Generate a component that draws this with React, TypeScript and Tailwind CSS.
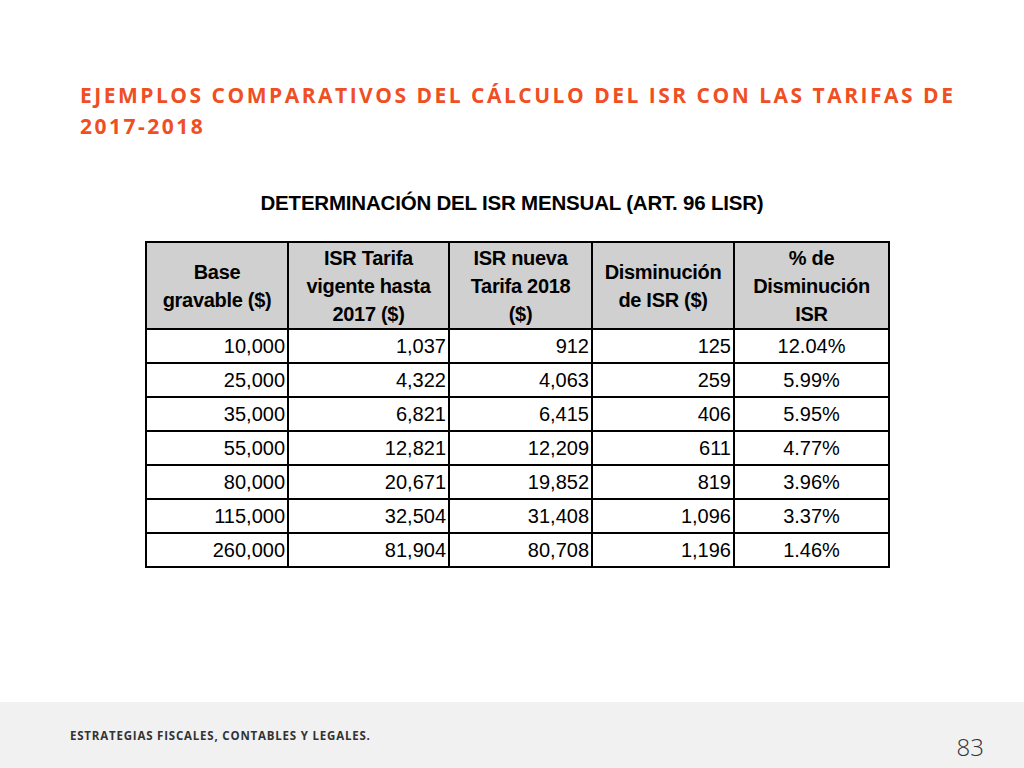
const headers = [
  ["Base", "gravable ($)"],
  ["ISR Tarifa", "vigente hasta", "2017 ($)"],
  ["ISR nueva", "Tarifa 2018", "($)"],
  ["Disminución", "de ISR ($)"],
  ["% de", "Disminución", "ISR"],
];

const rows = [
  ["10,000", "1,037", "912", "125", "12.04%"],
  ["25,000", "4,322", "4,063", "259", "5.99%"],
  ["35,000", "6,821", "6,415", "406", "5.95%"],
  ["55,000", "12,821", "12,209", "611", "4.77%"],
  ["80,000", "20,671", "19,852", "819", "3.96%"],
  ["115,000", "32,504", "31,408", "1,096", "3.37%"],
  ["260,000", "81,904", "80,708", "1,196", "1.46%"],
];

const widths = ["w-[142px]", "w-[161px]", "w-[143px]", "w-[142px]", "w-[155px]"];

export default function App() {
  return (
    <div className="w-[1024px] h-[768px] bg-white flex flex-col font-['Liberation_Sans',Arial,sans-serif]">
      <div className="flex-1 flex flex-col">
        <h1 className="pl-[80px] pr-[40px] pt-[80px] text-[21px] leading-[31px] font-bold tracking-[2.5px] text-[#f04e23] font-['Open_Sans',sans-serif]">
          EJEMPLOS COMPARATIVOS DEL CÁLCULO DEL ISR CON LAS TARIFAS DE 2017-2018
        </h1>
        <div className="mt-[49px] text-center text-[20.5px] leading-[24px] font-bold text-black tracking-[-0.2px]">
          DETERMINACIÓN DEL ISR MENSUAL (ART. 96 LISR)
        </div>
        <table className="ml-[145px] mt-[26px] w-[745px] table-fixed border-collapse border-2 border-black text-black text-[20px]">
          <colgroup>
            {widths.map((w, i) => (
              <col key={i} className={w} />
            ))}
          </colgroup>
          <thead>
            <tr className="bg-[#d0d0d0] h-[87px]">
              {headers.map((h, i) => (
                <th key={i} className="border-2 border-black font-bold leading-[28px] p-0 align-middle tracking-[-0.3px]">
                  {h.map((l, j) => (
                    <div key={j}>{l}</div>
                  ))}
                </th>
              ))}
            </tr>
          </thead>
          <tbody>
            {rows.map((r, i) => (
              <tr key={i} className="h-[34px]">
                {r.map((c, j) => (
                  <td
                    key={j}
                    className={`border-2 border-black leading-[30px] p-0 ${j === 4 ? "text-center" : "text-right pr-[2px]"}`}
                  >
                    {c}
                  </td>
                ))}
              </tr>
            ))}
          </tbody>
        </table>
      </div>
      <div className="h-[66px] bg-[#f0f1f0] flex items-start justify-between pl-[70px] pr-[40px]">
        <div className="mt-[25px] text-[11.5px] font-bold tracking-[0.8px] text-[#333] font-['Open_Sans',sans-serif]">
          ESTRATEGIAS FISCALES, CONTABLES Y LEGALES.
        </div>
        <div className="mt-[27px] text-[24px] text-[#333] font-['Open_Sans',sans-serif] font-light">83</div>
      </div>
    </div>
  );
}
